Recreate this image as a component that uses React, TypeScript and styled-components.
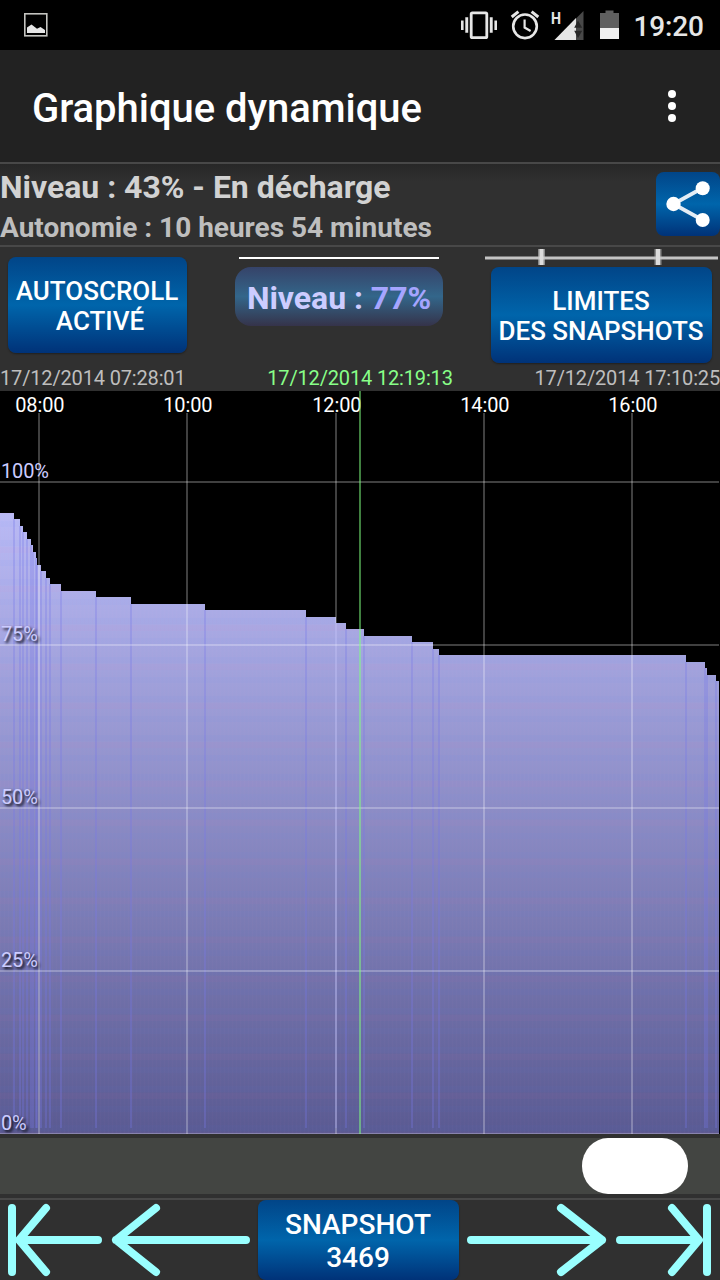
import React from 'react';
import styled, { createGlobalStyle } from 'styled-components';

const GlobalStyle = createGlobalStyle`
  * { box-sizing: border-box; }
  body { margin: 0; background: #303030; font-family: Roboto, "Liberation Sans", sans-serif; }
`;

const blueGradient = 'linear-gradient(#014588 0%, #0065ab 50%, #003278 100%)';

const Screen = styled.div`
  width: 720px;
  height: 1280px;
  display: flex;
  flex-direction: column;
  overflow: hidden;
  background: #303030;
  color: #fff;
`;

const StatusBar = styled.header`
  height: 50px;
  flex: none;
  background: #000;
  display: flex;
  justify-content: space-between;
`;

const ActionBar = styled.div`
  height: 112px;
  flex: none;
  background: #222;
  display: flex;
  align-items: center;
  justify-content: space-between;
  padding: 6px 44px 0 32px;
`;

const Title = styled.h1`
  margin: 0;
  font-size: 40px;
  font-weight: 500;
  line-height: 48px;
  letter-spacing: -0.04px;
  white-space: nowrap;
`;

const MenuButton = styled.button`
  display: flex;
  flex-direction: column;
  gap: 4px;
  padding: 0;
  margin-top: -6px;
  border: 0;
  background: none;
`;

const Dot = styled.span`
  width: 8px;
  height: 8px;
  border-radius: 50%;
  background: #fff;
`;

const Rule = styled.div`
  height: 2px;
  flex: none;
  background: #484848;
`;

const InfoPanel = styled.section`
  height: 81px;
  flex: none;
  display: flex;
  justify-content: space-between;
  padding-top: 8px;
  background: linear-gradient(#272727, #303030 18px);
`;

const InfoLine = styled.div<{ $size: number; $height: number; $color: string }>`
  font-size: ${(p) => p.$size}px;
  line-height: ${(p) => p.$height}px;
  color: ${(p) => p.$color};
  font-weight: 700;
  letter-spacing: -0.02px;
  white-space: nowrap;
`;

const ShareButton = styled.button`
  width: 64px;
  height: 64px;
  padding: 0;
  border: 0;
  border-radius: 8px;
  background: ${blueGradient};
`;

const Controls = styled.section`
  height: 119px;
  flex: none;
  display: flex;
  justify-content: space-between;
`;

const BlueButton = styled.button<{ $w: number; $h: number; $size: number; $line: number }>`
  width: ${(p) => p.$w}px;
  height: ${(p) => p.$h}px;
  flex: none;
  padding: 2px 1px 0 0;
  border: 0;
  border-radius: 8px;
  background: ${blueGradient};
  box-shadow: 0 1px 2px rgba(0, 0, 0, 0.35);
  color: #fff;
  font: 500 ${(p) => p.$size}px/${(p) => p.$line}px Roboto, "Liberation Sans", sans-serif;
  white-space: nowrap;
`;

const IndentedWord = styled.span`
  padding-left: 6px;
`;

const ScrollColumn = styled.div`
  padding: 10px 0 0 8px;
`;

const LevelColumn = styled.div`
  display: flex;
  flex-direction: column;
  align-items: center;
  padding: 10px 0 0 6px;
  gap: 8px;
`;

const LevelLine = styled.div`
  width: 200px;
  height: 2px;
  background: #fff;
`;

const LevelBadge = styled.div`
  width: 208px;
  height: 59px;
  border-radius: 16px;
  background: linear-gradient(#364369 0%, #33668a 50%, #35334a 100%);
  font-size: 32px;
  font-weight: 700;
  line-height: 62px;
  letter-spacing: -0.04px;
  text-align: center;
  color: #ccccff;
  white-space: nowrap;
`;

const LevelValue = styled.span`
  color: #a5a5ff;
`;

const LimitsColumn = styled.div`
  width: 235px;
  display: flex;
  flex-direction: column;
  align-items: flex-start;
  padding-top: 2px;
`;

const LimitsButton = styled(BlueButton)`
  margin: 2px 0 0 6px;
`;

const Dates = styled.div`
  height: 25px;
  flex: none;
  display: flex;
  justify-content: space-between;
  font-size: 20px;
  line-height: 25px;
  letter-spacing: -0.16px;
  color: #bebebe;
  white-space: nowrap;
`;

const CurrentDate = styled.span`
  color: #8f8;
`;

const ChartSvg = styled.svg`
  display: block;
  flex: none;
  background: #000;
  font-family: Roboto, "Liberation Sans", sans-serif;
  font-size: 20px;
  letter-spacing: -0.16px;
`;

const AxisLabel = styled.text`
  fill: #ccccff;
  text-shadow: 2px 2px 3px #000;
`;

const SliderTrack = styled.div`
  height: 56px;
  flex: none;
  margin: 4px 0;
  padding-right: 32px;
  display: flex;
  justify-content: flex-end;
  background: #434542;
`;

const SliderThumb = styled.div`
  width: 106px;
  height: 56px;
  border-radius: 26px / 28px;
  background: #fff;
`;

const Navigation = styled.nav`
  height: 80px;
  flex: none;
  display: flex;
`;

const NavIcon = styled.svg`
  display: block;
  flex: none;
  fill: none;
  stroke: #99ffff;
  stroke-width: 8;
  stroke-linecap: round;
  stroke-linejoin: round;
`;

/* Each entry is [start x, top y] of a battery level plateau, in chart pixels. */
const levels: [number, number][] = [
  [0, 122], [14, 128], [20, 135], [23, 141], [27, 148], [31, 154], [33, 161],
  [36, 167], [37, 174], [41, 180], [46, 187], [50, 193], [61, 200], [96, 206],
  [131, 213], [205, 219], [306, 226], [336, 232], [346, 238], [364, 245],
  [412, 251], [433, 258], [439, 264], [686, 271], [705, 277], [707, 284], [716, 290],
];

const hours = [
  { x: 39, label: '08:00' },
  { x: 187, label: '10:00' },
  { x: 336, label: '12:00' },
  { x: 484, label: '14:00' },
  { x: 632, label: '16:00' },
];

const percents = [
  { y: 91, label: '100%' },
  { y: 254, label: '75%' },
  { y: 417, label: '50%' },
  { y: 580, label: '25%' },
  { y: 743, label: '0%' },
];

function StatusIcons() {
  return (
    <svg width="290" height="50" viewBox="430 0 290 50" fill="#e6e6e6">
      <rect x="471.200" y="12.800" width="15.600" height="24.800" rx="1.200" fill="none" stroke="#e6e6e6" strokeWidth="2.800" />
      <path d="M465.300 17.300h2.900v15.500h-2.900zM461 20.500h2.600v9.500H461zM489.800 17.300h2.900v15.500h-2.900zM494.400 20.500h2.600v9.500h-2.600z" />
      <g fill="none" stroke="#e6e6e6" strokeWidth="2.600">
        <circle cx="525" cy="26.300" r="11.800" />
        <path d="M511.700 17l6.700-5.400M538.300 17l-6.700-5.400" strokeWidth="3" />
        <path d="M524.600 19.500v8l6 3.500" strokeWidth="2.200" />
      </g>
      <path d="M583.500 11v29h-29z" fill="#484848" />
      <path d="M576 18v22h-21.500z" />
      <path d="M578 20.500l4.200 7.300h-8zM574.200 30.700h8l-4.200 7.300z" fill="#282828" />
      <text x="551" y="24" fontSize="17" fontWeight="700" fontFamily="Roboto, sans-serif" textLength="10" lengthAdjust="spacingAndGlyphs">H</text>
      <path d="M600 13h5.500v-2.500h8V13h5.500v15h-19z" fill="#606060" />
      <path d="M600 28h19v11h-19z" fill="#f0f0f0" />
      <text x="633.5" y="35.500" fontSize="28" fontWeight="500" letterSpacing="-.15" fontFamily="Roboto, sans-serif">19:20</text>
    </svg>
  );
}

function Chart() {
  const area = levels
    .map(([x, y], i) => `${i === 0 ? 'M' : 'L'}${x} ${y}H${i + 1 < levels.length ? levels[i + 1][0] : 719}`)
    .join('');
  return (
    <ChartSvg width="720" height="743" viewBox="0 0 720 743">
      <defs>
        <linearGradient id="fill" gradientUnits="userSpaceOnUse" x1="0" y1="91" x2="0" y2="743">
          <stop offset="0" stopColor="#bebffa" />
          <stop offset="1" stopColor="#5a5a92" />
        </linearGradient>
        <pattern id="weave" width="4" height="39" patternUnits="userSpaceOnUse">
          <path d="M0 0h4v6H0z" fill="#ff70a0" fillOpacity=".03" />
          <path d="M0 13h4v6H0zM0 32h4v6H0z" fill="#4080ff" fillOpacity=".03" />
          <path d="M0 0h1v39H0z" fill="#ff80c0" fillOpacity=".02" />
        </pattern>
      </defs>
      {hours.map((h) => (
        <text key={h.label} x={h.x + 0.8} y="21.300" fill="#fff" textAnchor="middle">{h.label}</text>
      ))}
      <path d={`${area}V743H0z`} fill="url(#fill)" shapeRendering="crispEdges" />
      <path d={`${area}V743H0z`} fill="url(#weave)" shapeRendering="crispEdges" />
      {levels.slice(1).map(([x, y]) => (
        <rect key={x} x={x - 1} y={y} width="2" height={737 - y} fill="#7676e8" fillOpacity=".3" />
      ))}
      {percents.map((p) => (
        <AxisLabel key={p.label} x="1" y={p.label === '0%' ? 739.3 : p.y - 3.7}>{p.label}</AxisLabel>
      ))}
      {hours.map((h) => (
        <rect key={h.x} x={h.x - 1} y="22" width="2" height="721" fill="#fff" fillOpacity=".25" />
      ))}
      {percents.map((p) => (
        <rect key={p.y} x="0" y={p.y - 1} width="719" height="2" fill="#fff" fillOpacity=".25" />
      ))}
      <rect x="359" y="0" width="2" height="743" fill="#80ff80" fillOpacity=".5" />
    </ChartSvg>
  );
}

export default function App() {
  return (
    <Screen>
      <GlobalStyle />
      <StatusBar>
        <svg width="60" height="50" viewBox="0 0 60 50">
          <rect x="24.800" y="13.800" width="22" height="22" fill="none" stroke="#c4c4c0" strokeWidth="1.600" />
          <path d="M27 33v-5.500l4.500-3 5.500 4.300 3.500-1.800 4.500 3v3z" fill="#e6e6e6" />
        </svg>
        <StatusIcons />
      </StatusBar>
      <ActionBar>
        <Title>Graphique dynamique</Title>
        <MenuButton aria-label="Menu"><Dot /><Dot /><Dot /></MenuButton>
      </ActionBar>
      <Rule />
      <InfoPanel>
        <div>
          <InfoLine $size={32} $height={31} $color="#d2d2d2">Niveau : 43% - En décharge</InfoLine>
          <InfoLine $size={28} $height={49} $color="#bebebe">Autonomie : 10 heures 54 minutes</InfoLine>
        </div>
        <ShareButton aria-label="Partager">
          <svg width="64" height="64" viewBox="0 0 64 64" fill="#fff" display="block">
            <path d="M46.500 16L17.500 32l29 16" fill="none" stroke="#e4edf5" strokeWidth="3.800" />
            <circle cx="46.700" cy="16.300" r="7" />
            <circle cx="17.500" cy="32" r="7.200" />
            <circle cx="46.700" cy="48" r="7" />
          </svg>
        </ShareButton>
      </InfoPanel>
      <Rule />
      <Controls>
        <ScrollColumn>
          <BlueButton $w={179} $h={96} $size={26} $line={30}>AUTOSCROLL<br /><IndentedWord>ACTIVÉ</IndentedWord></BlueButton>
        </ScrollColumn>
        <LevelColumn>
          <LevelLine />
          <LevelBadge>Niveau : <LevelValue>77%</LevelValue></LevelBadge>
        </LevelColumn>
        <LimitsColumn>
          <svg width="235" height="16" viewBox="0 0 235 16" display="block">
            <path d="M53 0h7v16h-7zM169.500 0h7v16h-7z" fill="#8a8a8a" />
            <path d="M0 9h233" stroke="#c4c4c4" strokeWidth="3" />
            <path d="M54.500 0h4v16h-4zM171 0h4v16h-4z" fill="#dcdcdc" />
          </svg>
          <LimitsButton $w={221} $h={96} $size={26} $line={30}>LIMITES<br />DES SNAPSHOTS</LimitsButton>
        </LimitsColumn>
      </Controls>
      <Dates>
        <span>17/12/2014 07:28:01</span>
        <CurrentDate>17/12/2014 12:19:13</CurrentDate>
        <span>17/12/2014 17:10:25</span>
      </Dates>
      <Chart />
      <SliderTrack><SliderThumb /></SliderTrack>
      <Rule />
      <Navigation>
        <NavIcon width="107" height="80" viewBox="0 0 107 80">
          <path d="M12 8v64M46 8L19 40l27 32M20 40h78" />
        </NavIcon>
        <NavIcon width="151" height="80" viewBox="107 0 151 80">
          <path d="M156 8l-40 32 40 32M116 40h130" />
        </NavIcon>
        <BlueButton $w={201} $h={80} $size={28} $line={33}>SNAPSHOT<br />3469</BlueButton>
        <NavIcon width="153" height="80" viewBox="459 0 153 80">
          <path d="M561 8l41 32-41 32M471 40h131" />
        </NavIcon>
        <NavIcon width="108" height="80" viewBox="612 0 108 80">
          <path d="M672 8l27 32-27 32M620 40h78M707 8v64" />
        </NavIcon>
      </Navigation>
    </Screen>
  );
}
